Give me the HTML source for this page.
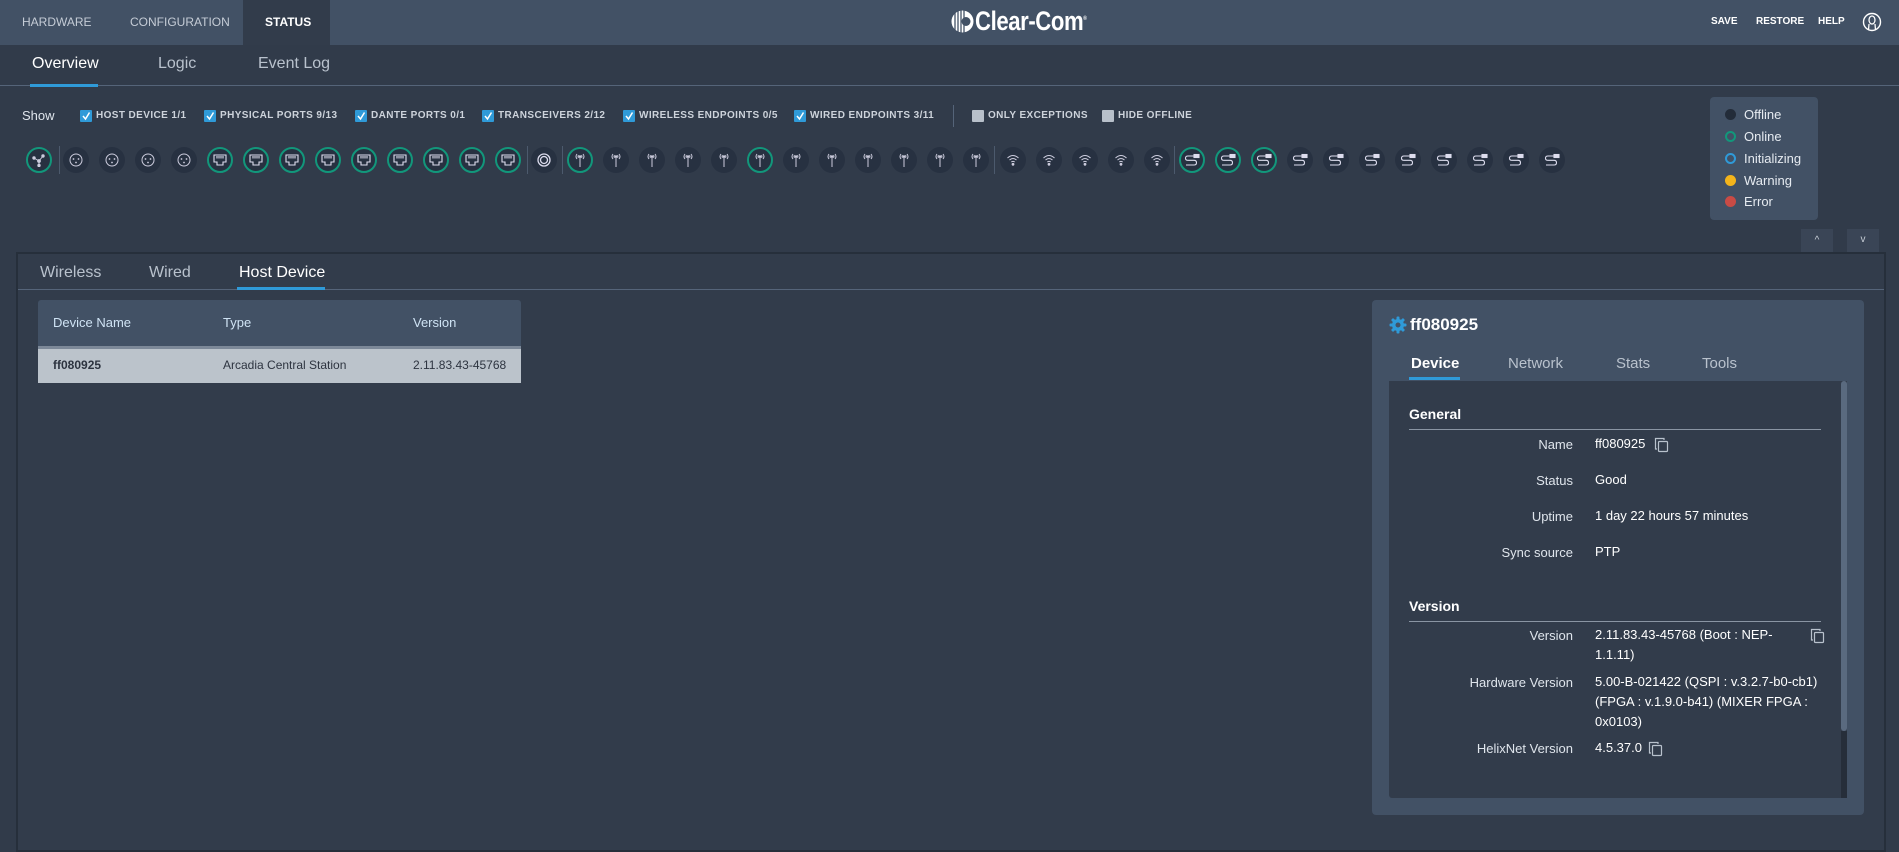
<!DOCTYPE html>
<html><head><meta charset="utf-8">
<style>
*{margin:0;padding:0;box-sizing:border-box}
body{width:1899px;height:847px;overflow:hidden;background:#313b4a;font-family:"Liberation Sans",sans-serif;color:#e8edf2;position:relative}
.abs{position:absolute;white-space:nowrap}
.top{position:absolute;left:0;top:0;width:1899px;height:45px;background:#425165}
.tt{font-size:12px;color:#c5ccd6;top:15px}
.cb{position:absolute;top:110px;width:12px;height:12px;background:#2f9ad8;border-radius:1px}
.cb svg{position:absolute;left:1px;top:1px}
.cl{position:absolute;top:110px;font-size:10px;font-weight:bold;color:#cdd3db;letter-spacing:.4px}
.ic{position:absolute;top:147px;width:26px;height:26px;border-radius:50%;background:#273141}
.ic.on{border:2px solid #12977b}
.ic svg{position:absolute;left:50%;top:50%;transform:translate(-50%,-50%)}
.sep{position:absolute;top:146px;width:1px;height:28px;background:#4c5a6d}
.lg{position:absolute;left:1710px;top:97px;width:108px;height:123px;background:#425165;border-radius:4px}
.lg div{position:absolute;left:34px;font-size:13px;color:#e6ebf1}
.lg span{position:absolute;left:-19px;top:2px;width:11px;height:11px;border-radius:50%}
.lbl{position:absolute;width:200px;text-align:right;left:1373px;font-size:13px;color:#dfe5ec}
.val{position:absolute;left:1595px;font-size:13px;color:#fff;line-height:20px}
</style></head><body>
<div class="top"></div>
<div class="abs" style="left:243px;top:0;width:87px;height:45px;background:#323c4b"></div>
<div class="abs tt" style="left:22px">HARDWARE</div>
<div class="abs tt" style="left:130px">CONFIGURATION</div>
<div class="abs tt" style="left:265px;color:#fff;font-weight:bold">STATUS</div>
<svg class="abs" style="left:951px;top:10px" width="23" height="23" viewBox="0 0 23 23"><circle cx="11.5" cy="11.5" r="11" fill="#fff"/><g stroke="#425165" stroke-width="1.3"><line x1="4" y1="1" x2="4" y2="22"/><line x1="7" y1="0" x2="7" y2="23"/><line x1="10" y1="0" x2="10" y2="23"/><line x1="13" y1="0" x2="13" y2="23"/></g><circle cx="15" cy="11.5" r="4.5" fill="#425165"/></svg>
<div class="abs" style="left:975px;top:6px;font-weight:bold;font-size:27px;color:#fff;letter-spacing:-0.5px;transform:scaleX(0.82);transform-origin:0 0">Clear-Com<sup style="font-size:6px">®</sup></div>
<div class="abs" style="left:1711px;top:16px;font-size:10px;font-weight:bold;color:#fff">SAVE</div>
<div class="abs" style="left:1756px;top:16px;font-size:10px;font-weight:bold;color:#fff">RESTORE</div>
<div class="abs" style="left:1818px;top:16px;font-size:10px;font-weight:bold;color:#fff">HELP</div>
<svg class="abs" style="left:1862px;top:11px" width="20" height="22" viewBox="0 0 20 22"><circle cx="10" cy="11" r="8.5" fill="none" stroke="#fff" stroke-width="1.4"/><ellipse cx="10" cy="9" rx="3" ry="4" fill="none" stroke="#fff" stroke-width="1.3"/><path d="M7 13 L6.5 19 M13 13 L13.5 19" stroke="#fff" stroke-width="1.3"/></svg>

<div class="abs" style="left:32px;top:55px;font-size:16px;color:#fff">Overview</div>
<div class="abs" style="left:158px;top:55px;font-size:16px;color:#b9c2cd">Logic</div>
<div class="abs" style="left:258px;top:55px;font-size:16px;color:#b9c2cd">Event Log</div>
<div class="abs" style="left:0;top:85px;width:1899px;height:1px;background:#556479"></div>
<div class="abs" style="left:30px;top:84px;width:68px;height:3px;background:#2f9ad8"></div>

<div class="abs" style="left:22px;top:108px;font-size:13px;color:#dfe5ec">Show</div>
<div class="cb" style="left:80px"><svg width="10" height="10"><path d="M2 5 L4.5 8 L8.5 1.5" stroke="#fff" stroke-width="1.5" fill="none"/></svg></div><div class="cl" style="left:96px">HOST DEVICE 1/1</div>
<div class="cb" style="left:204px"><svg width="10" height="10"><path d="M2 5 L4.5 8 L8.5 1.5" stroke="#fff" stroke-width="1.5" fill="none"/></svg></div><div class="cl" style="left:220px">PHYSICAL PORTS 9/13</div>
<div class="cb" style="left:355px"><svg width="10" height="10"><path d="M2 5 L4.5 8 L8.5 1.5" stroke="#fff" stroke-width="1.5" fill="none"/></svg></div><div class="cl" style="left:371px">DANTE PORTS 0/1</div>
<div class="cb" style="left:482px"><svg width="10" height="10"><path d="M2 5 L4.5 8 L8.5 1.5" stroke="#fff" stroke-width="1.5" fill="none"/></svg></div><div class="cl" style="left:498px">TRANSCEIVERS 2/12</div>
<div class="cb" style="left:623px"><svg width="10" height="10"><path d="M2 5 L4.5 8 L8.5 1.5" stroke="#fff" stroke-width="1.5" fill="none"/></svg></div><div class="cl" style="left:639px">WIRELESS ENDPOINTS 0/5</div>
<div class="cb" style="left:794px"><svg width="10" height="10"><path d="M2 5 L4.5 8 L8.5 1.5" stroke="#fff" stroke-width="1.5" fill="none"/></svg></div><div class="cl" style="left:810px">WIRED ENDPOINTS 3/11</div>
<div class="abs" style="left:953px;top:105px;width:1px;height:22px;background:#556479"></div>
<div class="cb" style="left:972px;background:#b8c0ca"></div><div class="cl" style="left:988px">ONLY EXCEPTIONS</div>
<div class="cb" style="left:1102px;background:#b8c0ca"></div><div class="cl" style="left:1118px">HIDE OFFLINE</div>

<!-- icons -->
<div class="ic on" style="left:26px"><svg width="14" height="14" viewBox="0 0 14 14" fill="none" stroke="#ccd" stroke-width="1"><path d="M7 8 L2 5 M7 8 L11 3 M7 8 L7 13"/><circle cx="2" cy="5" r="1.2" fill="#ccd"/><circle cx="11" cy="3" r="1.2" fill="#ccd"/><circle cx="7" cy="12.5" r="1.2" fill="#ccd"/><circle cx="7" cy="8" r="1.4" fill="#ccd"/></svg></div>
<div class="sep" style="left:59px"></div>
<div class="ic" style="left:63px"><svg width="14" height="14"><circle cx="7" cy="7" r="6" fill="none" stroke="#ccd"/><circle cx="4.5" cy="6" r=".9" fill="#ccd"/><circle cx="9.5" cy="6" r=".9" fill="#ccd"/><circle cx="7" cy="9.5" r=".9" fill="#ccd"/></svg></div>
<div class="ic" style="left:99px"><svg width="14" height="14"><circle cx="7" cy="7" r="6" fill="none" stroke="#ccd"/><circle cx="4.5" cy="6" r=".9" fill="#ccd"/><circle cx="9.5" cy="6" r=".9" fill="#ccd"/><circle cx="7" cy="9.5" r=".9" fill="#ccd"/></svg></div>
<div class="ic" style="left:135px"><svg width="14" height="14"><circle cx="7" cy="7" r="6" fill="none" stroke="#ccd"/><circle cx="4.5" cy="6" r=".9" fill="#ccd"/><circle cx="9.5" cy="6" r=".9" fill="#ccd"/><circle cx="7" cy="9.5" r=".9" fill="#ccd"/></svg></div>
<div class="ic" style="left:171px"><svg width="14" height="14"><circle cx="7" cy="7" r="6" fill="none" stroke="#ccd"/><circle cx="4.5" cy="6" r=".9" fill="#ccd"/><circle cx="9.5" cy="6" r=".9" fill="#ccd"/><circle cx="7" cy="9.5" r=".9" fill="#ccd"/></svg></div>
<div class="ic on" style="left:207px"><svg width="14" height="12" viewBox="0 0 14 12"><path d="M1 1 H13 V8 H10 V11 H4 V8 H1 Z M4 2 V4.5 M6 2 V4.5 M8 2 V4.5 M10 2 V4.5" fill="none" stroke="#dde" stroke-width="1.1"/></svg></div>
<div class="ic on" style="left:243px"><svg width="14" height="12" viewBox="0 0 14 12"><path d="M1 1 H13 V8 H10 V11 H4 V8 H1 Z M4 2 V4.5 M6 2 V4.5 M8 2 V4.5 M10 2 V4.5" fill="none" stroke="#dde" stroke-width="1.1"/></svg></div>
<div class="ic on" style="left:279px"><svg width="14" height="12" viewBox="0 0 14 12"><path d="M1 1 H13 V8 H10 V11 H4 V8 H1 Z M4 2 V4.5 M6 2 V4.5 M8 2 V4.5 M10 2 V4.5" fill="none" stroke="#dde" stroke-width="1.1"/></svg></div>
<div class="ic on" style="left:315px"><svg width="14" height="12" viewBox="0 0 14 12"><path d="M1 1 H13 V8 H10 V11 H4 V8 H1 Z M4 2 V4.5 M6 2 V4.5 M8 2 V4.5 M10 2 V4.5" fill="none" stroke="#dde" stroke-width="1.1"/></svg></div>
<div class="ic on" style="left:351px"><svg width="14" height="12" viewBox="0 0 14 12"><path d="M1 1 H13 V8 H10 V11 H4 V8 H1 Z M4 2 V4.5 M6 2 V4.5 M8 2 V4.5 M10 2 V4.5" fill="none" stroke="#dde" stroke-width="1.1"/></svg></div>
<div class="ic on" style="left:387px"><svg width="14" height="12" viewBox="0 0 14 12"><path d="M1 1 H13 V8 H10 V11 H4 V8 H1 Z M4 2 V4.5 M6 2 V4.5 M8 2 V4.5 M10 2 V4.5" fill="none" stroke="#dde" stroke-width="1.1"/></svg></div>
<div class="ic on" style="left:423px"><svg width="14" height="12" viewBox="0 0 14 12"><path d="M1 1 H13 V8 H10 V11 H4 V8 H1 Z M4 2 V4.5 M6 2 V4.5 M8 2 V4.5 M10 2 V4.5" fill="none" stroke="#dde" stroke-width="1.1"/></svg></div>
<div class="ic on" style="left:459px"><svg width="14" height="12" viewBox="0 0 14 12"><path d="M1 1 H13 V8 H10 V11 H4 V8 H1 Z M4 2 V4.5 M6 2 V4.5 M8 2 V4.5 M10 2 V4.5" fill="none" stroke="#dde" stroke-width="1.1"/></svg></div>
<div class="ic on" style="left:495px"><svg width="14" height="12" viewBox="0 0 14 12"><path d="M1 1 H13 V8 H10 V11 H4 V8 H1 Z M4 2 V4.5 M6 2 V4.5 M8 2 V4.5 M10 2 V4.5" fill="none" stroke="#dde" stroke-width="1.1"/></svg></div>
<div class="sep" style="left:527px"></div>
<div class="ic" style="left:531px"><svg width="14" height="14"><circle cx="7" cy="7" r="6" fill="none" stroke="#dde" stroke-width="1.3"/><circle cx="7" cy="7" r="3.5" fill="none" stroke="#dde" stroke-width="1.3"/></svg></div>
<div class="sep" style="left:562px"></div>
<div class="ic on" style="left:567px"><svg width="14" height="16" viewBox="0 0 14 16" fill="none" stroke="#ccd" stroke-width="1"><path d="M4 2 Q2 4.5 4 7 M10 2 Q12 4.5 10 7 M5.5 3.2 Q4.6 4.5 5.5 5.8 M8.5 3.2 Q9.4 4.5 8.5 5.8 M7 5 V15"/><circle cx="7" cy="4.5" r=".8" fill="#ccd"/></svg></div>
<div class="ic" style="left:603px"><svg width="14" height="16" viewBox="0 0 14 16" fill="none" stroke="#ccd" stroke-width="1"><path d="M4 2 Q2 4.5 4 7 M10 2 Q12 4.5 10 7 M5.5 3.2 Q4.6 4.5 5.5 5.8 M8.5 3.2 Q9.4 4.5 8.5 5.8 M7 5 V15"/><circle cx="7" cy="4.5" r=".8" fill="#ccd"/></svg></div>
<div class="ic" style="left:639px"><svg width="14" height="16" viewBox="0 0 14 16" fill="none" stroke="#ccd" stroke-width="1"><path d="M4 2 Q2 4.5 4 7 M10 2 Q12 4.5 10 7 M5.5 3.2 Q4.6 4.5 5.5 5.8 M8.5 3.2 Q9.4 4.5 8.5 5.8 M7 5 V15"/><circle cx="7" cy="4.5" r=".8" fill="#ccd"/></svg></div>
<div class="ic" style="left:675px"><svg width="14" height="16" viewBox="0 0 14 16" fill="none" stroke="#ccd" stroke-width="1"><path d="M4 2 Q2 4.5 4 7 M10 2 Q12 4.5 10 7 M5.5 3.2 Q4.6 4.5 5.5 5.8 M8.5 3.2 Q9.4 4.5 8.5 5.8 M7 5 V15"/><circle cx="7" cy="4.5" r=".8" fill="#ccd"/></svg></div>
<div class="ic" style="left:711px"><svg width="14" height="16" viewBox="0 0 14 16" fill="none" stroke="#ccd" stroke-width="1"><path d="M4 2 Q2 4.5 4 7 M10 2 Q12 4.5 10 7 M5.5 3.2 Q4.6 4.5 5.5 5.8 M8.5 3.2 Q9.4 4.5 8.5 5.8 M7 5 V15"/><circle cx="7" cy="4.5" r=".8" fill="#ccd"/></svg></div>
<div class="ic on" style="left:747px"><svg width="14" height="16" viewBox="0 0 14 16" fill="none" stroke="#ccd" stroke-width="1"><path d="M4 2 Q2 4.5 4 7 M10 2 Q12 4.5 10 7 M5.5 3.2 Q4.6 4.5 5.5 5.8 M8.5 3.2 Q9.4 4.5 8.5 5.8 M7 5 V15"/><circle cx="7" cy="4.5" r=".8" fill="#ccd"/></svg></div>
<div class="ic" style="left:783px"><svg width="14" height="16" viewBox="0 0 14 16" fill="none" stroke="#ccd" stroke-width="1"><path d="M4 2 Q2 4.5 4 7 M10 2 Q12 4.5 10 7 M5.5 3.2 Q4.6 4.5 5.5 5.8 M8.5 3.2 Q9.4 4.5 8.5 5.8 M7 5 V15"/><circle cx="7" cy="4.5" r=".8" fill="#ccd"/></svg></div>
<div class="ic" style="left:819px"><svg width="14" height="16" viewBox="0 0 14 16" fill="none" stroke="#ccd" stroke-width="1"><path d="M4 2 Q2 4.5 4 7 M10 2 Q12 4.5 10 7 M5.5 3.2 Q4.6 4.5 5.5 5.8 M8.5 3.2 Q9.4 4.5 8.5 5.8 M7 5 V15"/><circle cx="7" cy="4.5" r=".8" fill="#ccd"/></svg></div>
<div class="ic" style="left:855px"><svg width="14" height="16" viewBox="0 0 14 16" fill="none" stroke="#ccd" stroke-width="1"><path d="M4 2 Q2 4.5 4 7 M10 2 Q12 4.5 10 7 M5.5 3.2 Q4.6 4.5 5.5 5.8 M8.5 3.2 Q9.4 4.5 8.5 5.8 M7 5 V15"/><circle cx="7" cy="4.5" r=".8" fill="#ccd"/></svg></div>
<div class="ic" style="left:891px"><svg width="14" height="16" viewBox="0 0 14 16" fill="none" stroke="#ccd" stroke-width="1"><path d="M4 2 Q2 4.5 4 7 M10 2 Q12 4.5 10 7 M5.5 3.2 Q4.6 4.5 5.5 5.8 M8.5 3.2 Q9.4 4.5 8.5 5.8 M7 5 V15"/><circle cx="7" cy="4.5" r=".8" fill="#ccd"/></svg></div>
<div class="ic" style="left:927px"><svg width="14" height="16" viewBox="0 0 14 16" fill="none" stroke="#ccd" stroke-width="1"><path d="M4 2 Q2 4.5 4 7 M10 2 Q12 4.5 10 7 M5.5 3.2 Q4.6 4.5 5.5 5.8 M8.5 3.2 Q9.4 4.5 8.5 5.8 M7 5 V15"/><circle cx="7" cy="4.5" r=".8" fill="#ccd"/></svg></div>
<div class="ic" style="left:963px"><svg width="14" height="16" viewBox="0 0 14 16" fill="none" stroke="#ccd" stroke-width="1"><path d="M4 2 Q2 4.5 4 7 M10 2 Q12 4.5 10 7 M5.5 3.2 Q4.6 4.5 5.5 5.8 M8.5 3.2 Q9.4 4.5 8.5 5.8 M7 5 V15"/><circle cx="7" cy="4.5" r=".8" fill="#ccd"/></svg></div>
<div class="sep" style="left:994px"></div>
<div class="ic" style="left:1000px"><svg width="14" height="12" viewBox="0 0 14 12" fill="none" stroke="#ccd" stroke-width="1"><path d="M1.5 4 Q7 -1 12.5 4 M3.5 6 Q7 3 10.5 6 M5.3 8 Q7 6.8 8.7 8"/><circle cx="7" cy="10.3" r=".9" fill="#ccd"/></svg></div>
<div class="ic" style="left:1036px"><svg width="14" height="12" viewBox="0 0 14 12" fill="none" stroke="#ccd" stroke-width="1"><path d="M1.5 4 Q7 -1 12.5 4 M3.5 6 Q7 3 10.5 6 M5.3 8 Q7 6.8 8.7 8"/><circle cx="7" cy="10.3" r=".9" fill="#ccd"/></svg></div>
<div class="ic" style="left:1072px"><svg width="14" height="12" viewBox="0 0 14 12" fill="none" stroke="#ccd" stroke-width="1"><path d="M1.5 4 Q7 -1 12.5 4 M3.5 6 Q7 3 10.5 6 M5.3 8 Q7 6.8 8.7 8"/><circle cx="7" cy="10.3" r=".9" fill="#ccd"/></svg></div>
<div class="ic" style="left:1108px"><svg width="14" height="12" viewBox="0 0 14 12" fill="none" stroke="#ccd" stroke-width="1"><path d="M1.5 4 Q7 -1 12.5 4 M3.5 6 Q7 3 10.5 6 M5.3 8 Q7 6.8 8.7 8"/><circle cx="7" cy="10.3" r=".9" fill="#ccd"/></svg></div>
<div class="ic" style="left:1144px"><svg width="14" height="12" viewBox="0 0 14 12" fill="none" stroke="#ccd" stroke-width="1"><path d="M1.5 4 Q7 -1 12.5 4 M3.5 6 Q7 3 10.5 6 M5.3 8 Q7 6.8 8.7 8"/><circle cx="7" cy="10.3" r=".9" fill="#ccd"/></svg></div>
<div class="sep" style="left:1174px"></div>
<div class="ic on" style="left:1179px"><svg width="16" height="14" viewBox="0 0 16 14" fill="none" stroke="#dde" stroke-width="1.1"><path d="M10 3 H4 Q1.5 3 1.5 5.2 Q1.5 7.3 4 7.3 H10 Q12.5 7.3 12.5 9.6 Q12.5 12 10 12 H2"/><rect x="10" y="1.5" width="5" height="3" fill="#dde"/></svg></div>
<div class="ic on" style="left:1215px"><svg width="16" height="14" viewBox="0 0 16 14" fill="none" stroke="#dde" stroke-width="1.1"><path d="M10 3 H4 Q1.5 3 1.5 5.2 Q1.5 7.3 4 7.3 H10 Q12.5 7.3 12.5 9.6 Q12.5 12 10 12 H2"/><rect x="10" y="1.5" width="5" height="3" fill="#dde"/></svg></div>
<div class="ic on" style="left:1251px"><svg width="16" height="14" viewBox="0 0 16 14" fill="none" stroke="#dde" stroke-width="1.1"><path d="M10 3 H4 Q1.5 3 1.5 5.2 Q1.5 7.3 4 7.3 H10 Q12.5 7.3 12.5 9.6 Q12.5 12 10 12 H2"/><rect x="10" y="1.5" width="5" height="3" fill="#dde"/></svg></div>
<div class="ic" style="left:1287px"><svg width="16" height="14" viewBox="0 0 16 14" fill="none" stroke="#dde" stroke-width="1.1"><path d="M10 3 H4 Q1.5 3 1.5 5.2 Q1.5 7.3 4 7.3 H10 Q12.5 7.3 12.5 9.6 Q12.5 12 10 12 H2"/><rect x="10" y="1.5" width="5" height="3" fill="#dde"/></svg></div>
<div class="ic" style="left:1323px"><svg width="16" height="14" viewBox="0 0 16 14" fill="none" stroke="#dde" stroke-width="1.1"><path d="M10 3 H4 Q1.5 3 1.5 5.2 Q1.5 7.3 4 7.3 H10 Q12.5 7.3 12.5 9.6 Q12.5 12 10 12 H2"/><rect x="10" y="1.5" width="5" height="3" fill="#dde"/></svg></div>
<div class="ic" style="left:1359px"><svg width="16" height="14" viewBox="0 0 16 14" fill="none" stroke="#dde" stroke-width="1.1"><path d="M10 3 H4 Q1.5 3 1.5 5.2 Q1.5 7.3 4 7.3 H10 Q12.5 7.3 12.5 9.6 Q12.5 12 10 12 H2"/><rect x="10" y="1.5" width="5" height="3" fill="#dde"/></svg></div>
<div class="ic" style="left:1395px"><svg width="16" height="14" viewBox="0 0 16 14" fill="none" stroke="#dde" stroke-width="1.1"><path d="M10 3 H4 Q1.5 3 1.5 5.2 Q1.5 7.3 4 7.3 H10 Q12.5 7.3 12.5 9.6 Q12.5 12 10 12 H2"/><rect x="10" y="1.5" width="5" height="3" fill="#dde"/></svg></div>
<div class="ic" style="left:1431px"><svg width="16" height="14" viewBox="0 0 16 14" fill="none" stroke="#dde" stroke-width="1.1"><path d="M10 3 H4 Q1.5 3 1.5 5.2 Q1.5 7.3 4 7.3 H10 Q12.5 7.3 12.5 9.6 Q12.5 12 10 12 H2"/><rect x="10" y="1.5" width="5" height="3" fill="#dde"/></svg></div>
<div class="ic" style="left:1467px"><svg width="16" height="14" viewBox="0 0 16 14" fill="none" stroke="#dde" stroke-width="1.1"><path d="M10 3 H4 Q1.5 3 1.5 5.2 Q1.5 7.3 4 7.3 H10 Q12.5 7.3 12.5 9.6 Q12.5 12 10 12 H2"/><rect x="10" y="1.5" width="5" height="3" fill="#dde"/></svg></div>
<div class="ic" style="left:1503px"><svg width="16" height="14" viewBox="0 0 16 14" fill="none" stroke="#dde" stroke-width="1.1"><path d="M10 3 H4 Q1.5 3 1.5 5.2 Q1.5 7.3 4 7.3 H10 Q12.5 7.3 12.5 9.6 Q12.5 12 10 12 H2"/><rect x="10" y="1.5" width="5" height="3" fill="#dde"/></svg></div>
<div class="ic" style="left:1539px"><svg width="16" height="14" viewBox="0 0 16 14" fill="none" stroke="#dde" stroke-width="1.1"><path d="M10 3 H4 Q1.5 3 1.5 5.2 Q1.5 7.3 4 7.3 H10 Q12.5 7.3 12.5 9.6 Q12.5 12 10 12 H2"/><rect x="10" y="1.5" width="5" height="3" fill="#dde"/></svg></div>

<div class="lg">
<div style="top:10px"><span style="background:#232c39"></span>Offline</div>
<div style="top:32px"><span style="border:2px solid #12977b"></span>Online</div>
<div style="top:54px"><span style="border:2px solid #2f9ad8"></span>Initializing</div>
<div style="top:76px"><span style="background:#f3b41b"></span>Warning</div>
<div style="top:97px"><span style="background:#c94b45"></span>Error</div>
</div>
<div class="abs" style="left:1801px;top:229px;width:32px;height:24px;background:#3a4556;color:#c9d0d8;font-size:10px;text-align:center;line-height:24px">^</div>
<div class="abs" style="left:1847px;top:229px;width:32px;height:24px;background:#3a4556;color:#c9d0d8;font-size:10px;text-align:center;line-height:22px">v</div>

<!-- main panel -->
<div class="abs" style="left:16px;top:252px;width:1870px;height:600px;border:2px solid #262f3b;background:#323c4b"></div>
<div class="abs" style="left:40px;top:264px;font-size:16px;color:#b9c2cd">Wireless</div>
<div class="abs" style="left:149px;top:264px;font-size:16px;color:#b9c2cd">Wired</div>
<div class="abs" style="left:239px;top:264px;font-size:16px;color:#fff">Host Device</div>
<div class="abs" style="left:18px;top:289px;width:1866px;height:1px;background:#556479"></div>
<div class="abs" style="left:237px;top:287px;width:88px;height:3px;background:#2f9ad8"></div>

<div class="abs" style="left:38px;top:300px;width:483px;height:46px;background:#425165;border-radius:3px 3px 0 0"></div>
<div class="abs" style="left:38px;top:346px;width:483px;height:3px;background:#7c8898"></div>
<div class="abs" style="left:38px;top:349px;width:483px;height:34px;background:#bbc3cb"></div>
<div class="abs" style="left:53px;top:315px;font-size:13px;color:#cfe3f4">Device Name</div>
<div class="abs" style="left:223px;top:315px;font-size:13px;color:#cfe3f4">Type</div>
<div class="abs" style="left:413px;top:315px;font-size:13px;color:#cfe3f4">Version</div>
<div class="abs" style="left:53px;top:358px;font-size:12px;font-weight:bold;color:#2d3440">ff080925</div>
<div class="abs" style="left:223px;top:358px;font-size:12px;color:#2d3440">Arcadia Central Station</div>
<div class="abs" style="left:413px;top:358px;font-size:12px;color:#2d3440">2.11.83.43-45768</div>

<!-- right card -->
<div class="abs" style="left:1372px;top:300px;width:492px;height:515px;background:#425165;border-radius:4px"></div>
<svg class="abs" style="left:1389px;top:316px" width="18" height="18" viewBox="0 0 18 18"><g fill="#2f9ad8"><circle cx="9" cy="9" r="6"/><rect x="7.5" y="0.5" width="3" height="17" rx="1"/><rect x="0.5" y="7.5" width="17" height="3" rx="1"/><rect x="7.5" y="0.5" width="3" height="17" rx="1" transform="rotate(45 9 9)"/><rect x="7.5" y="0.5" width="3" height="17" rx="1" transform="rotate(-45 9 9)"/></g><circle cx="9" cy="9" r="2.5" fill="#425165"/></svg>
<div class="abs" style="left:1410px;top:315px;font-size:17px;font-weight:bold;color:#fff">ff080925</div>
<div class="abs" style="left:1411px;top:355px;font-size:15px;font-weight:bold;color:#fff">Device</div>
<div class="abs" style="left:1508px;top:355px;font-size:15px;color:#b9c2cd">Network</div>
<div class="abs" style="left:1616px;top:355px;font-size:15px;color:#b9c2cd">Stats</div>
<div class="abs" style="left:1702px;top:355px;font-size:15px;color:#b9c2cd">Tools</div>
<div class="abs" style="left:1409px;top:377px;width:51px;height:3px;background:#2f9ad8"></div>
<div class="abs" style="left:1389px;top:381px;width:458px;height:417px;background:#323c4b;border-radius:0 0 3px 3px"></div>
<div class="abs" style="left:1841px;top:381px;width:6px;height:350px;background:#5a6a7f;border-radius:3px"></div>
<div class="abs" style="left:1841px;top:731px;width:6px;height:67px;background:#262e3a"></div>

<div class="abs" style="left:1409px;top:406px;font-size:14px;font-weight:bold;color:#fff">General</div>
<div class="abs" style="left:1409px;top:429px;width:412px;height:1px;background:#8a95a3"></div>
<div class="lbl" style="top:437px">Name</div><div class="val" style="top:434px">ff080925</div>
<svg class="abs" style="left:1654px;top:437px" width="15" height="16" viewBox="0 0 15 16" fill="none" stroke="#b9c2cd" stroke-width="1.2"><path d="M3 12 H1.5 V1.5 H10 V3"/><rect x="4.5" y="4.5" width="9" height="10" rx="1"/></svg>
<div class="lbl" style="top:473px">Status</div><div class="val" style="top:470px">Good</div>
<div class="lbl" style="top:509px">Uptime</div><div class="val" style="top:506px">1 day 22 hours 57 minutes</div>
<div class="lbl" style="top:545px">Sync source</div><div class="val" style="top:542px">PTP</div>

<div class="abs" style="left:1409px;top:598px;font-size:14px;font-weight:bold;color:#fff">Version</div>
<div class="abs" style="left:1409px;top:621px;width:412px;height:1px;background:#8a95a3"></div>
<div class="lbl" style="top:628px">Version</div><div class="val" style="top:625px;width:210px;white-space:normal">2.11.83.43-45768 (Boot : NEP-1.1.11)</div>
<svg class="abs" style="left:1810px;top:628px" width="15" height="16" viewBox="0 0 15 16" fill="none" stroke="#b9c2cd" stroke-width="1.2"><path d="M3 12 H1.5 V1.5 H10 V3"/><rect x="4.5" y="4.5" width="9" height="10" rx="1"/></svg>
<div class="lbl" style="top:675px">Hardware Version</div><div class="val" style="top:672px;width:225px;white-space:normal">5.00-B-021422 (QSPI : v.3.2.7-b0-cb1) (FPGA : v.1.9.0-b41) (MIXER FPGA : 0x0103)</div>
<div class="lbl" style="top:741px">HelixNet Version</div><div class="val" style="top:738px">4.5.37.0</div>
<svg class="abs" style="left:1648px;top:741px" width="15" height="16" viewBox="0 0 15 16" fill="none" stroke="#b9c2cd" stroke-width="1.2"><path d="M3 12 H1.5 V1.5 H10 V3"/><rect x="4.5" y="4.5" width="9" height="10" rx="1"/></svg>
</body></html>
